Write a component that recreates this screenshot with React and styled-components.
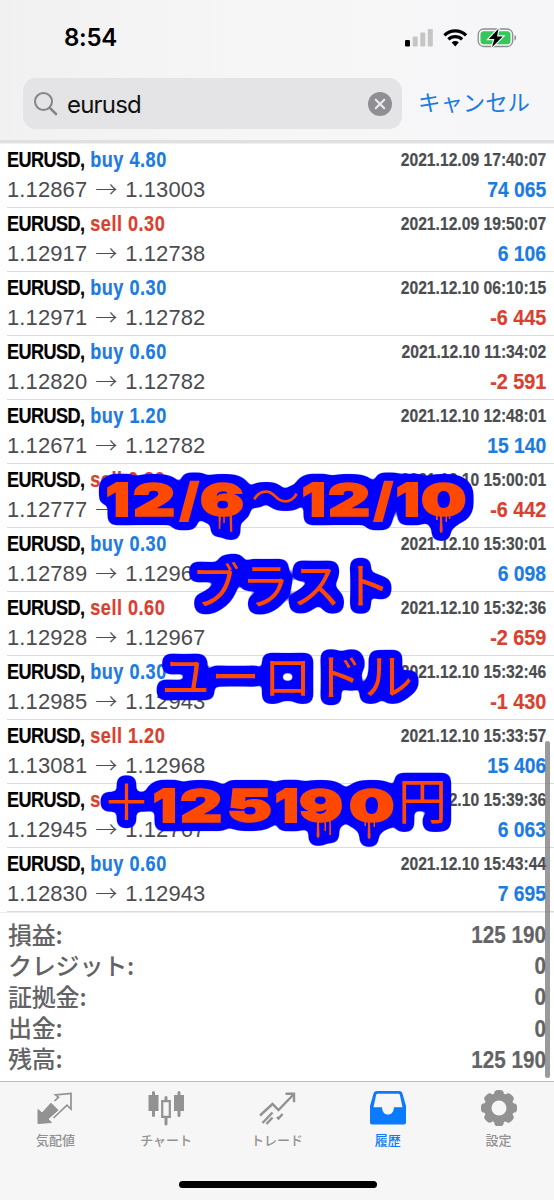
import React from "react";
import styled, { createGlobalStyle } from "styled-components";

const COLORS = {
  BLUE: "#1b7be0",
  RED: "#d8412f",
  GRAY: "#8e8e93",
  TAB: "#929292",
  TINT: "#0a7aff",
  STICKER: "#ff4800",
  STICKER_EDGE: "#0000ff",
};

const GlobalStyle = createGlobalStyle`
  * {
    box-sizing: border-box;
  }

  body {
    margin: 0;
    background: #fff;
    font-family: "Liberation Sans", "Noto Sans CJK JP", sans-serif;
  }
`;

const Screen = styled.div`
  position: relative;
  display: flex;
  flex-direction: column;
  width: 554px;
  height: 1200px;
  overflow: hidden;
  background: #fff;
`;

const Header = styled.header`
  height: 143px;
  background: linear-gradient(90deg, #f1f1f2, #f7f6f7 45%, #f6f6f8);
  border-bottom: 3px solid #e0e0e1;
`;

const StatusBar = styled.div`
  display: flex;
  justify-content: space-between;
  align-items: center;
  height: 78px;
  padding: 0 37px 3px 64px;
`;

const Clock = styled.div`
  font: 600 24px/30px Inter, sans-serif;
  letter-spacing: -0.3px;
  color: #000;
`;

const StatusIcons = styled.div`
  display: flex;
  align-items: center;

  svg {
    display: block;
  }
`;

const SearchBar = styled.div`
  display: flex;
  align-items: center;
  padding-left: 23px;
`;

const SearchField = styled.div`
  display: flex;
  align-items: center;
  width: 379px;
  height: 51px;
  padding: 0 10px 0 11px;
  border-radius: 13px;
  background: #e4e4e7;
`;

const Query = styled.div`
  flex: 1;
  margin-left: 9px;
  padding-top: 2px;
  font: 400 24px/30px Inter, sans-serif;
  letter-spacing: -0.8px;
  color: #111;
`;

const Cancel = styled.div`
  margin: -5px 0 0 16px;
  font: 400 22.4px/30px "Noto Sans CJK JP", sans-serif;
  color: #1b7be0;
  white-space: nowrap;
`;

const DealList = styled.main`
  border-top: 1px solid #f0f0f0;
`;

const DealRow = styled.div`
  display: flex;
  flex-direction: column;
  height: 64px;
  margin-left: 7px;
  padding: 3px 8px 0 0;
  border-bottom: 1px solid #dcdcdc;
`;

const Line = styled.div`
  display: flex;
  justify-content: space-between;
  align-items: center;
  height: ${({ $height }) => $height || 30}px;
  white-space: nowrap;
`;

const Condensed = styled.span`
  display: inline-block;
  font-weight: 700;
  font-size: ${({ $size }) => $size}px;
  color: ${({ $color }) => $color};
  transform: scaleX(${({ $scale }) => $scale});
  transform-origin: ${({ $origin }) => $origin || "right"} center;
  -webkit-text-stroke: 0.2px currentColor;
`;

const Symbol = styled.span`
  color: #000;
  letter-spacing: -0.7px;
`;

const Side = styled.span`
  margin-left: 1px;
  letter-spacing: 0.6px;
  color: ${({ $side }) => ($side === "buy" ? COLORS.BLUE : COLORS.RED)};
`;

const Prices = styled.span`
  display: flex;
  align-items: center;
  font-size: 22px;
  letter-spacing: 0.1px;
  color: #4c4c50;
`;

const Arrow = styled.span`
  width: 38px;
  margin-top: -6px;
  text-align: center;
  font: 300 22px/28px "Noto Sans CJK JP", sans-serif;
`;

const Totals = styled.section`
  flex: 1;
  padding: 7px 8px 0;
  border-top: 1px solid #ebebeb;
`;

const TotalLabel = styled.span`
  margin-top: -5px;
  font: 500 24px/31px "Noto Sans CJK JP", sans-serif;
  letter-spacing: -0.2px;
  color: #636366;
`;

const TabBar = styled.nav`
  display: grid;
  grid-template-columns: repeat(5, 1fr);
  height: 87px;
  padding-top: 8px;
  border-top: 1px solid #bfbfbf;
  background: #f6f6f6;
`;

const Tab = styled.div`
  display: flex;
  flex-direction: column;
  align-items: center;
  color: ${({ $active }) => ($active ? COLORS.TINT : COLORS.TAB)};
  font: 500 13px/20px "Noto Sans CJK JP", sans-serif;

  svg {
    display: block;
    margin-bottom: 4px;
  }
`;

const HomeArea = styled.div`
  height: 32px;
  padding: 13px 0 0 1px;
  background: #f6f6f6;
`;

const HomeIndicator = styled.div`
  width: 198px;
  height: 7px;
  margin: 0 auto;
  border-radius: 4px;
  background: #000;
`;

const ScrollThumb = styled.div`
  position: absolute;
  top: 741px;
  right: 4px;
  width: 5px;
  height: 337px;
  border-radius: 3px;
  background: rgba(120, 120, 120, 0.75);
`;

const StickerCanvas = styled.svg`
  position: absolute;
  top: 0;
  left: 0;
  pointer-events: none;

  text {
    font-family: "Noto Sans CJK JP", sans-serif;
    font-weight: 400;
  }

  .digit {
    font-family: Inter, sans-serif;
    font-weight: 900;
    stroke: ${COLORS.STICKER};
    stroke-width: 2px;
    vector-effect: non-scaling-stroke;
  }

  .wave {
    font-weight: 300;
  }
`;

const deals = [
  ["buy", "4.80", "1.12867", "1.13003", "2021.12.09 17:40:07", "74 065"],
  ["sell", "0.30", "1.12917", "1.12738", "2021.12.09 19:50:07", "6 106"],
  ["buy", "0.30", "1.12971", "1.12782", "2021.12.10 06:10:15", "-6 445"],
  ["buy", "0.60", "1.12820", "1.12782", "2021.12.10 11:34:02", "-2 591"],
  ["buy", "1.20", "1.12671", "1.12782", "2021.12.10 12:48:01", "15 140"],
  ["sell", "0.30", "1.12777", "1.12967", "2021.12.10 15:00:01", "-6 442"],
  ["buy", "0.30", "1.12789", "1.12967", "2021.12.10 15:30:01", "6 098"],
  ["sell", "0.60", "1.12928", "1.12967", "2021.12.10 15:32:36", "-2 659"],
  ["buy", "0.30", "1.12985", "1.12943", "2021.12.10 15:32:46", "-1 430"],
  ["sell", "1.20", "1.13081", "1.12968", "2021.12.10 15:33:57", "15 406"],
  ["sell", "0.30", "1.12945", "1.12767", "2021.12.10 15:39:36", "6 063"],
  ["buy", "0.60", "1.12830", "1.12943", "2021.12.10 15:43:44", "7 695"],
];

const totals = [
  ["損益:", "125 190"],
  ["クレジット:", "0"],
  ["証拠金:", "0"],
  ["出金:", "0"],
  ["残高:", "125 190"],
];

// char, left, baseline, horizontal stretch
const digits = [
  ["1", 106, 516, 1.15],
  ["2", 133, 516, 1.45],
  ["/", 180, 516, 1.0],
  ["6", 200, 516, 1.45],
  ["1", 302, 516, 1.15],
  ["2", 328, 516, 1.45],
  ["/", 374, 516, 1.0],
  ["1", 396, 516, 1.15],
  ["0", 421, 516, 1.42],
  ["1", 153, 822, 1.15],
  ["2", 180, 822, 1.45],
  ["5", 227, 822, 1.5],
  ["1", 275, 822, 1.15],
  ["9", 299, 822, 1.45],
  ["0", 349, 822, 1.42],
];

// char, left, baseline
const kana = [
  ["〜", 251, 515],
  ["ブ", 191, 604],
  ["ラ", 241, 604],
  ["ス", 292, 604],
  ["ト", 342, 604],
  ["ユ", 161, 695],
  ["ー", 211, 695],
  ["ロ", 263, 695],
  ["ド", 314, 695],
  ["ル", 364, 695],
  ["＋", 102, 820],
  ["円", 398, 819],
];

const Sticker = () => (
  <StickerCanvas width="554" height="1200" viewBox="0 0 554 1200">
    <filter
      id="edge"
      filterUnits="userSpaceOnUse"
      colorInterpolationFilters="sRGB"
      x="80"
      y="450"
      width="420"
      height="420"
    >
      <feMorphology in="SourceAlpha" operator="dilate" radius="5" result="grown" />
      <feGaussianBlur in="grown" stdDeviation="3.6" result="spread" />
      <feComponentTransfer in="spread" result="outline">
        <feFuncA type="linear" slope="12" intercept="-1.7" />
      </feComponentTransfer>
      <feFlood floodColor={COLORS.STICKER_EDGE} />
      <feComposite in2="outline" operator="in" result="edge" />
      <feMerge>
        <feMergeNode in="edge" />
        <feMergeNode in="SourceGraphic" />
      </feMerge>
    </filter>
    <g fill={COLORS.STICKER} filter="url(#edge)">
      {digits.map(([char, x, y, stretch]) => (
        <text
          key={`${x}-${y}`}
          className="digit"
          fontSize="45"
          transform={`translate(${x} ${y}) scale(${stretch} 1)`}
        >
          {char}
        </text>
      ))}
      {kana.map(([char, x, y]) => (
        <text
          key={`${x}-${y}`}
          className={char === "〜" ? "wave" : undefined}
          x={x}
          y={y}
          fontSize="49"
        >
          {char}
        </text>
      ))}
      <path
        d="M218.500 515h2.500l-.7 14h-1.500zM223.300 515h1.500v8h-1.500zM229.500 515h2.500l.3 16c-.8 1.500-2 1.500-2.300 0zM436 515h1.800v5H436zM440 515h2l.7 16c-.8 2.500-2.500 2.500-3 0zM445.500 515h1.500v7h-1.500zM449 514h1.300v5H449zM317 821h2l.6 15c-.7 2.500-2.500 2.500-3 0zM324.500 821h1.500v10h-1.500zM329.300 821h1.500l.3 14h-1.800zM364.500 821h1.500v5h-1.500zM368 821h2l.6 16c-.7 2.500-2.500 2.500-3 0zM373.500 821h1.500v6h-1.500z"
      />
    </g>
  </StickerCanvas>
);

const Deal = ({ deal: [side, volume, open, close, time, profit] }) => (
  <DealRow>
    <Line $height={27}>
      <Condensed $size={21.5} $scale={0.842} $origin="left">
        <Symbol>EURUSD,</Symbol>{" "}
        <Side $side={side}>
          {side} {volume}
        </Side>
      </Condensed>
      <Condensed $size={18} $scale={0.87} $color="#4c4c50">
        {time}
      </Condensed>
    </Line>
    <Line $height={32}>
      <Prices>
        {open}
        <Arrow>→</Arrow>
        {close}
      </Prices>
      <Condensed
        $size={22}
        $scale={profit.startsWith("-") ? 0.9 : 0.877}
        $color={profit.startsWith("-") ? COLORS.RED : COLORS.BLUE}
      >
        {profit}
      </Condensed>
    </Line>
  </DealRow>
);

const QuotesIcon = () => (
  <svg width="38" height="36" viewBox="0 0 38 36">
    <path
      d="M2 19.500 6 23 15 13.200l7 7L12 29l3.500 3.500L2 33.500z"
      fill="currentColor"
      stroke="currentColor"
      strokeLinejoin="round"
    />
    <path
      d="M18.500 11l4-3.800L19.500 4.800 35 3.500V19l-4-3.800L17.500 28"
      fill="none"
      stroke="currentColor"
      strokeWidth="1.700"
    />
  </svg>
);

const ChartIcon = () => (
  <svg width="38" height="36" viewBox="0 0 38 36">
    <g stroke="currentColor" strokeWidth="3" strokeLinecap="round">
      <path d="M6.500 2.500v23M19 7.500v26.500M32 2.500v23" />
    </g>
    <path d="M1.500 5h10v16h-10zM27 5h10v16H27z" fill="currentColor" />
    <path
      d="M15.200 11.200h7.600v15.600h-7.600z"
      fill="#f6f6f6"
      stroke="currentColor"
      strokeWidth="2.200"
    />
  </svg>
);

const TradeIcon = () => (
  <svg width="38" height="36" viewBox="0 0 38 36">
    <g fill="none" stroke="currentColor" strokeWidth="2.400">
      <path d="M2 25.500 14.500 14l6 6L35.500 4.500M27.500 3.800H36v8.500M4.500 33l10-10.500M8.500 34l6-6.500M19 27l1.500 1.500 4-4.500" />
    </g>
  </svg>
);

const HistoryIcon = () => (
  <svg width="38" height="36" viewBox="0 0 38 36">
    <path
      fillRule="evenodd"
      fill="currentColor"
      d="M8 1h22c1.700 0 2.800.8 3.400 2.200L37 16v16.500c0 1.200-.8 2-2 2H3c-1.200 0-2-.8-2-2V16L4.600 3.200C5.200 1.800 6.300 1 8 1zM9 3.800c-1 0-1.600.4-1.900 1.300L4.500 17.200H13c.2 4.500 2.300 7.300 6 7.300s5.800-2.800 6-7.300h8.500L30.900 5.100c-.3-.9-.9-1.300-1.900-1.300z"
    />
  </svg>
);

const SettingsIcon = () => (
  <svg width="38" height="36" viewBox="0 0 38 36">
    <g fill="currentColor">
      {[0, 45, 90, 135].map((angle) => (
        <rect
          key={angle}
          x="14.200"
          y="0"
          width="9.600"
          height="36"
          rx="3.600"
          transform={`rotate(${angle} 19 18)`}
        />
      ))}
    </g>
    <circle
      cx="19"
      cy="18"
      r="11"
      fill="none"
      stroke="currentColor"
      strokeWidth="8"
    />
    <circle cx="19" cy="18" r="7.500" fill="#f6f6f6" />
  </svg>
);

const tabs = [
  ["気配値", QuotesIcon],
  ["チャート", ChartIcon],
  ["トレード", TradeIcon],
  ["履歴", HistoryIcon],
  ["設定", SettingsIcon],
];

const App = () => (
  <Screen>
    <GlobalStyle />
    <Header>
      <StatusBar>
        <Clock>8:54</Clock>
        <StatusIcons>
          <svg width="112" height="22" viewBox="0 0 112 22">
            <rect x="0" y="13" width="5" height="6.500" rx="1.300" />
            <g fill="#c5c5c6">
              <rect x="7.700" y="9.500" width="5" height="10" rx="1.300" />
              <rect x="15.300" y="5.500" width="5" height="14" rx="1.300" />
              <rect x="22.800" y="2" width="5" height="17.500" rx="1.300" />
            </g>
            <g fill="none" stroke="#000" strokeWidth="3.200">
              <path d="M39.400 8.300a15.500 15.500 0 0 1 21.700 0" />
              <path d="M43.400 12.400a9.800 9.800 0 0 1 13.700 0" />
            </g>
            <path d="M46.700 15.600a5 5 0 0 1 7.100 0L50.250 19.500z" />
            <rect
              x="73.200"
              y="2"
              width="34.500"
              height="17.500"
              rx="5.500"
              fill="none"
              stroke="#8e8e8e"
              strokeWidth="1.300"
            />
            <rect
              x="75.500"
              y="4.300"
              width="30"
              height="13"
              rx="3.500"
              fill="#35c759"
            />
            <path d="M109.500 8c2.200.8 2.200 4.700 0 5.500z" fill="#8e8e8e" />
            <path
              d="M93.500 1.800 83.800 12h5.600l-2.400 8.200L97.700 9.500H92z"
              stroke="#f6f6f6"
              strokeWidth="2.400"
              paintOrder="stroke"
            />
          </svg>
        </StatusIcons>
      </StatusBar>
      <SearchBar>
        <SearchField>
          <svg
            width="24"
            height="25"
            viewBox="0 0 24 25"
            fill="none"
            stroke="#858588"
          >
            <circle cx="9.500" cy="10.500" r="8.500" strokeWidth="2" />
            <path
              d="M15.800 16.800 22 23"
              strokeWidth="2.600"
              strokeLinecap="round"
            />
          </svg>
          <Query>eurusd</Query>
          <svg width="24" height="24" viewBox="0 0 24 24">
            <circle cx="12" cy="12" r="12" fill={COLORS.GRAY} />
            <path
              d="M7.700 7.700l8.600 8.600M16.300 7.700l-8.600 8.600"
              stroke="#ececee"
              strokeWidth="2"
              strokeLinecap="round"
            />
          </svg>
        </SearchField>
        <Cancel>キャンセル</Cancel>
      </SearchBar>
    </Header>
    <DealList>
      {deals.map((deal) => (
        <Deal key={deal[4]} deal={deal} />
      ))}
    </DealList>
    <Totals>
      {totals.map(([label, value]) => (
        <Line key={label} $height={31.2}>
          <TotalLabel>{label}</TotalLabel>
          <Condensed $size={23.5} $scale={0.88} $color="#636366">
            {value}
          </Condensed>
        </Line>
      ))}
    </Totals>
    <TabBar>
      {tabs.map(([label, Icon]) => (
        <Tab key={label} $active={label === "履歴"}>
          <Icon />
          {label}
        </Tab>
      ))}
    </TabBar>
    <HomeArea>
      <HomeIndicator />
    </HomeArea>
    <ScrollThumb />
    <Sticker />
  </Screen>
);

export default App;
